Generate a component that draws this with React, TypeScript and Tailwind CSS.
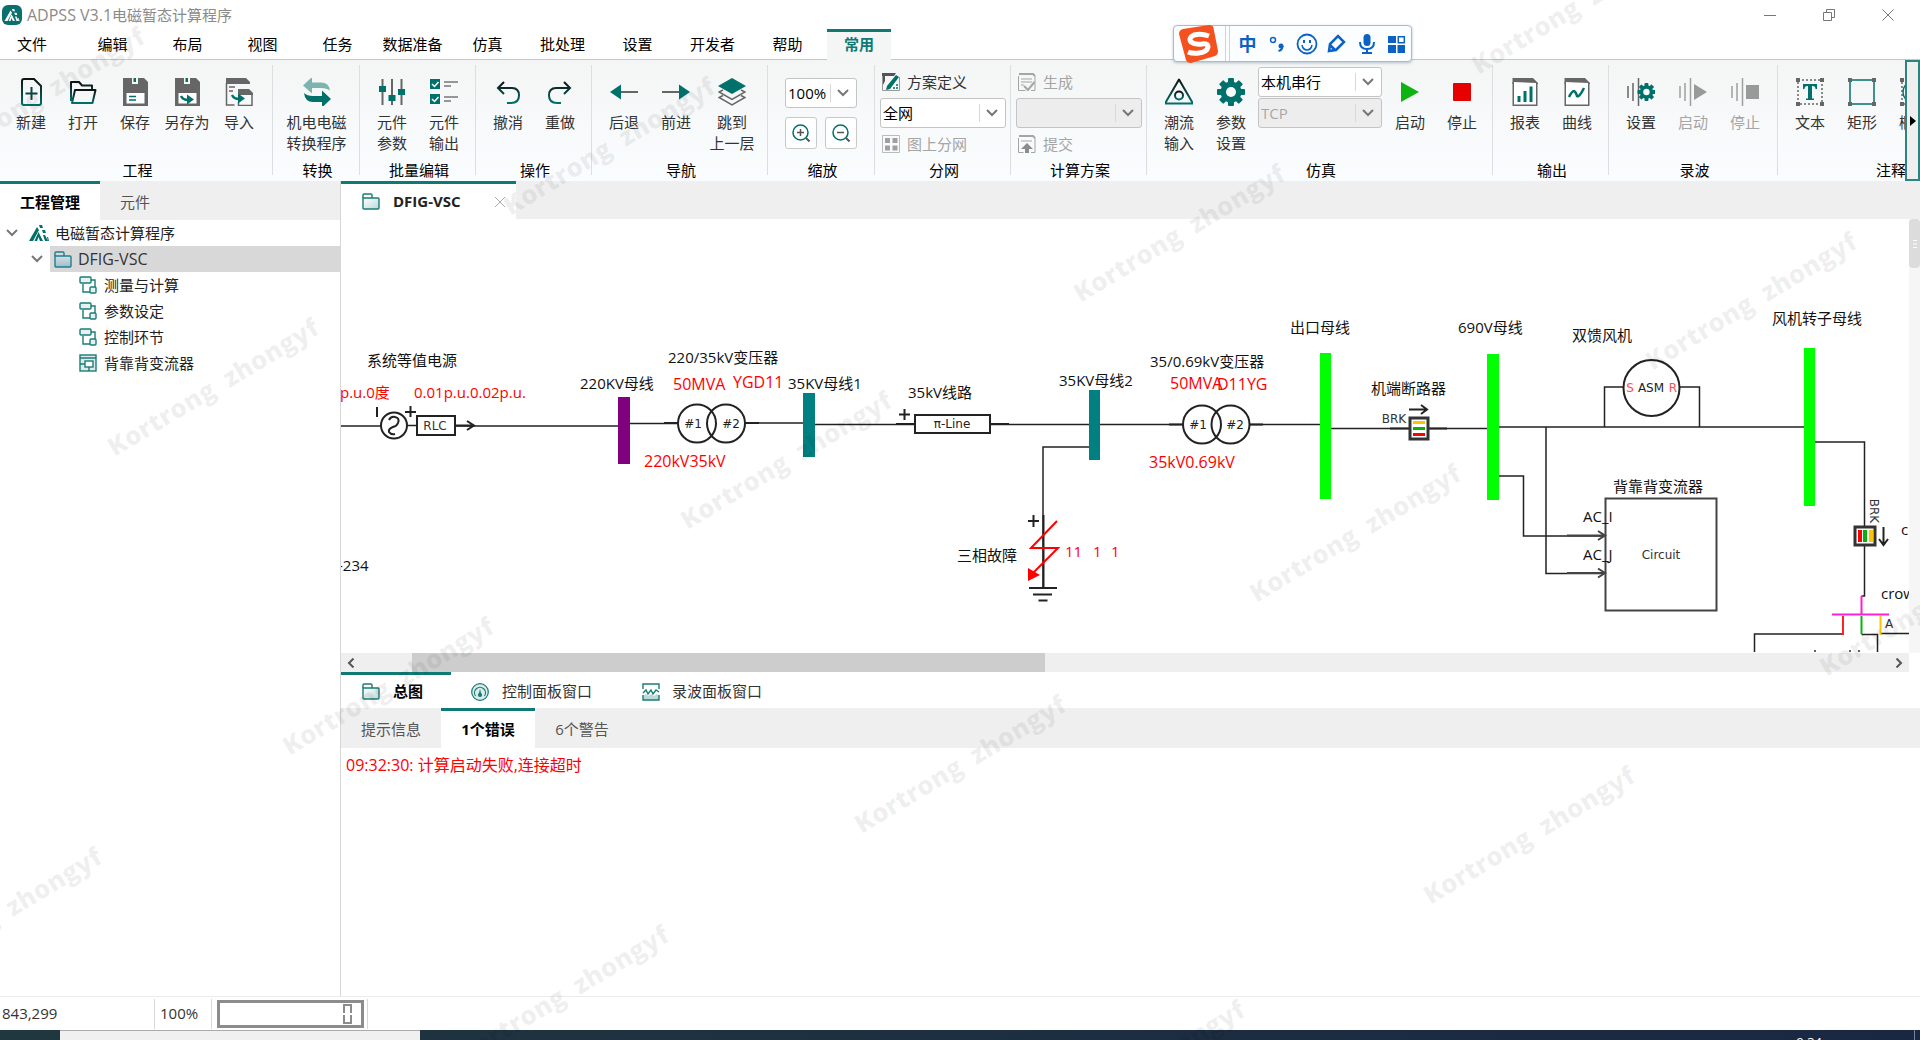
import React, { useState } from "react";

const TEAL = "#00706b";
const GRAY = "#666666";

type IconProps = { className?: string };

const box = "h-7 w-7 shrink-0";

const NewIcon = () => (
  <svg viewBox="0 0 28 28" className={box} fill="none">
    <defs>
      <linearGradient id="darkTeal" x1="0" y1="0" x2="0" y2="1">
        <stop offset="0" stopColor="#111" />
        <stop offset="1" stopColor={TEAL} />
      </linearGradient>
    </defs>
    <path d="M7 1h10l7 7v17q0 2-2 2H7q-2 0-2-2V3q0-2 2-2Z" stroke="url(#darkTeal)" strokeWidth="2" />
    <path d="M14.500 9v13M8.500 15.500h12" stroke="#0a4542" strokeWidth="2" />
  </svg>
);
const OpenIcon = () => (
  <svg viewBox="0 0 28 28" className={box} fill="none" stroke="url(#darkTeal)" strokeWidth="2" strokeLinejoin="round">
    <path d="M2 23V4h8l3 3.500h10V12" />
    <path d="M6 12h20.500l-3 13H3Z" />
  </svg>
);
const Floppy = () => (
  <>
    <path d="M2 0h9v6h6V0h6l4 4v24H2Z" fill={GRAY} />
    <path d="M5.500 15h18v10.500h-18Z" fill="#fff" />
    <path d="M12.500 0h2.500v4h-2.500Z" fill={TEAL} />
  </>
);
const SaveIcon = () => (
  <svg viewBox="0 0 28 28" className={box}>
    <Floppy />
    <path d="M8 18.500h7M8 22h7" stroke={TEAL} strokeWidth="1.500" />
  </svg>
);
const ArrowIn = () => (
  <>
    <path d="M0 0q2 4 7 4" fill="none" stroke={TEAL} strokeWidth="2.500" />
    <path d="M6 -1.500l7 5-7 5Z" fill={TEAL} />
  </>
);
const SaveAsIcon = () => (
  <svg viewBox="0 0 28 28" className={box}>
    <Floppy />
    <g transform="translate(8 18)"><ArrowIn /></g>
  </svg>
);
const ImportIcon = () => (
  <svg viewBox="0 0 28 28" className={box}>
    <path d="M1 0h20l4 4v2H1Z" fill={GRAY} />
    <path d="M1.500 5v22h8M4 9h6M4 13h4" fill="none" stroke={GRAY} strokeWidth="1.500" />
    <path d="M13 11h11l4 4v2H13Z" fill={GRAY} />
    <path d="M13.500 24v3.500h13.500V16" fill="none" stroke={GRAY} strokeWidth="1.500" />
    <g transform="translate(7 17)"><ArrowIn /></g>
  </svg>
);
const SwapIcon = () => (
  <svg viewBox="0 0 28 28" className={box}>
    <path d="M0 7.500 9-1v5.500h9q8 0 9 8-3-2.500-9-2.500H9v5.500Z" fill="#7db4b0" />
    <path d="M28 21 19 29.500V24h-9q-8 0-9-9 3 3 9 3h9v-5.500Z" fill={TEAL} />
  </svg>
);
const SlidersIcon = () => (
  <svg viewBox="0 0 28 28" className={box}>
    <path d="M4.500 1v26M14 1v26M23.500 1v26" stroke={GRAY} strokeWidth="2" />
    <path d="M1 8h7v6H1ZM10.500 17h7v6h-7ZM20 11h7v6h-7Z" fill={TEAL} />
  </svg>
);
const ChecksIcon = () => (
  <svg viewBox="0 0 28 28" className={box} fill="none">
    <path d="M0 1h10v10H0ZM0 16h10v10H0Z" fill={TEAL} />
    <path d="m2 6 2.500 2.500L8.500 4M2 21l2.500 2.500L8.500 19" stroke="#fff" strokeWidth="1.500" />
    <path d="M14 4h14M14 8h7M14 19h14M14 23h7" stroke="#777" strokeWidth="1.500" />
  </svg>
);
const UndoIcon = () => (
  <svg viewBox="0 0 28 28" className={box} fill="none" stroke="url(#darkTeal)" strokeWidth="2">
    <path d="M10 4 4 10l6 6M4 10h14q7 0 7 7.500T17 25h-4" />
  </svg>
);
const RedoIcon = () => (
  <svg viewBox="0 0 28 28" className={box} fill="none" stroke="url(#darkTeal)" strokeWidth="2">
    <path d="m18 4 6 6-6 6M24 10H10q-7 0-7 7.500T11 25h4" />
  </svg>
);
const BackIcon = () => (
  <svg viewBox="0 0 28 28" className={box}>
    <path d="M10 14h18" stroke={GRAY} strokeWidth="2" />
    <path d="M0 14 11 6.500v15Z" fill={TEAL} />
  </svg>
);
const ForwardIcon = () => (
  <svg viewBox="0 0 28 28" className={box}>
    <path d="M0 14h18" stroke={GRAY} strokeWidth="2" />
    <path d="M28 14 17 6.500v15Z" fill={TEAL} />
  </svg>
);
const LayersIcon = () => (
  <svg viewBox="0 0 28 28" className={box} fill="none">
    <path d="M14 0 28 8 14 16 0 8Z" fill={TEAL} />
    <path d="m5 12-4 2 13 7.500L27 14l-4-2M5 17.500l-4 2L14 27l13-7.500-4-2" stroke={GRAY} strokeWidth="1.500" />
  </svg>
);
const FlowIcon = () => (
  <svg viewBox="0 0 28 28" className={box} fill="none" stroke="url(#darkTeal)" strokeWidth="2">
    <path d="M14 1.500 28 25.500H0Z" strokeLinejoin="round" />
    <circle cx="14" cy="17.500" r="4" />
  </svg>
);
const Gear = ({ fill = TEAL }: { fill?: string }) => (
  <g fill={fill}>
    {[0, 45, 90, 135].map((a) => (
      <rect key={a} x="11" y="0" width="6" height="28" rx="1" transform={`rotate(${a} 14 14)`} />
    ))}
    <circle cx="14" cy="14" r="10.500" />
    <circle cx="14" cy="14" r="5" fill="#f7f9fb" />
  </g>
);
const GearIcon = () => (
  <svg viewBox="0 0 28 28" className={box}><Gear /></svg>
);
const PlayIcon = () => (
  <svg viewBox="0 0 28 28" className={box}><path d="M5 4l18 10L5 24Z" fill="#10b410" /></svg>
);
const StopIcon = () => (
  <svg viewBox="0 0 28 28" className={box}><rect x="5" y="5" width="18" height="18" rx="1" fill="#e60000" /></svg>
);
const Sheet = () => (
  <>
    <path d="M1.500 0H22l5 5v1H1.500Z" fill={GRAY} />
    <path d="M2.250 4v23.250h23.500V5" fill="#fff" stroke={GRAY} strokeWidth="1.500" />
  </>
);
const ReportIcon = () => (
  <svg viewBox="0 0 28 28" className={box}>
    <Sheet />
    <path d="M8 24v-6M14 24V13M20 24V8.500" stroke={TEAL} strokeWidth="3" />
  </svg>
);
const CurveIcon = () => (
  <svg viewBox="0 0 28 28" className={box} fill="none">
    <Sheet />
    <path d="M6 19q3-6 5-6 2 1 3 5 2 2 7-8" stroke={TEAL} strokeWidth="2.500" />
  </svg>
);
const Bars = ({ c }: { c: string }) => (
  <path d="M1 8v12M6 5v18M11.500 0v28" stroke={c} strokeWidth="1.500" />
);
const RecSetIcon = () => (
  <svg viewBox="0 0 28 28" className={box}>
    <Bars c={GRAY} />
    <g transform="translate(10.500 5) scale(.64)"><Gear /></g>
  </svg>
);
const RecPlayIcon = () => (
  <svg viewBox="0 0 28 28" className={box}><Bars c="#a0a0a0" /><path d="M15 6l13 8-13 8Z" fill="#999" /></svg>
);
const RecStopIcon = () => (
  <svg viewBox="0 0 28 28" className={box}><Bars c="#a0a0a0" /><path d="M15 7h13v14H15Z" fill="#999" /></svg>
);
const Corners = () => <path d="M0 0h4v4H0ZM24 0h4v4h-4ZM0 24h4v4H0ZM24 24h4v4h-4Z" fill={GRAY} />;
const TextIcon = () => (
  <svg viewBox="0 0 28 28" className={box} fill="none">
    <Corners />
    <path d="M2 2h24v24H2Z" stroke={GRAY} strokeWidth="1.500" strokeDasharray="2 2" />
    <path d="M7 6h14v5h-1.500q0-3-3-3H16v12.500h2V22h-8v-1.500h2V8h-.500q-3 0-3 3H7Z" fill={TEAL} />
  </svg>
);
const RectIcon = () => (
  <svg viewBox="0 0 28 28" className={box} fill="none">
    <path d="M2 2h24v24H2Z" stroke={TEAL} strokeWidth="1.500" />
    <Corners />
  </svg>
);
const EllipseIcon = () => (
  <svg viewBox="0 0 28 28" className={box} fill="none">
    <Corners />
    <path d="M2 2h24v24H2Z" stroke={GRAY} strokeWidth="1.500" strokeDasharray="2 2" />
    <ellipse cx="14" cy="14" rx="11" ry="11" stroke={TEAL} strokeWidth="1.500" />
  </svg>
);

const small = "h-[18px] w-[18px] shrink-0";
const PlanIcon = () => (
  <svg viewBox="0 0 18 18" className={small}>
    <path d="M0 0h14l-2 3H3v5L0 14Z" fill="#555" />
    <path d="M.500 3v14.500h17V4" fill="none" stroke="#999" />
    <path d="M14 2l3 2-9 12-4 1 1-4Z" fill={TEAL} />
    <path d="M11 15h2M14 15h2M14 12h2" stroke={TEAL} strokeWidth="1.500" />
  </svg>
);
const GridIcon = () => (
  <svg viewBox="0 0 18 18" className={small}>
    <path d="M.500.500h17v17H.500Z" fill="none" stroke="#bbb" />
    <path d="M3 3h5v5H3ZM10.500 3h5v5h-5ZM3 10.500h5v5H3ZM10.500 10.500h5v5h-5Z" fill="#a0a0a0" />
  </svg>
);
const GenIcon = () => (
  <svg viewBox="0 0 18 18" className={small} fill="none" stroke="#a5a5a5">
    <path d="M1 1h14l2 2" strokeWidth="2" />
    <path d="M.500 3v14.500h7M17 3v14.500h-4M3 6h11M3 9h11M3 12h3" />
    <path d="m6 13 4 4 6.500-8" strokeWidth="2" />
  </svg>
);
const SubmitIcon = () => (
  <svg viewBox="0 0 18 18" className={small} fill="none" stroke="#a5a5a5">
    <path d="M1 1h14l2 2" strokeWidth="2" />
    <path d="M.500 3v14.500h5M17 3v14.500h-4M3 6h11" />
    <path d="M9 8l6 6h-4v4H7v-4H3Z" fill="#8c8c8c" stroke="none" />
  </svg>
);

const Chevron = ({ className = "" }: IconProps) => (
  <svg viewBox="0 0 12 8" className={`h-2 w-3 ${className}`} fill="none" stroke="#777" strokeWidth="2">
    <path d="m1 1 5 5 5-5" />
  </svg>
);

function Combo({ label, value, disabled, className }: { label: string; value: string; disabled?: boolean; className: string }) {
  return (
    <div className={`relative h-[30px] ${className}`}>
      <select
        aria-label={label}
        disabled={disabled}
        className="h-full w-full appearance-none rounded-[3px] border border-[#c4c4c4] bg-white pr-6 pl-[2px] text-[15px] text-black opacity-100 disabled:bg-[#ededed] disabled:text-[#a8a8a8]"
      >
        <option>{value}</option>
      </select>
      <span className="pointer-events-none absolute inset-y-[6px] right-0 flex w-[27px] items-center border-l border-[#d8d8d8] pl-[6px]">
        <Chevron />
      </span>
    </div>
  );
}

function Tool({ icon, label, disabled, width = "w-[52px]" }: { icon: React.ReactNode; label: string; disabled?: boolean; width?: string }) {
  return (
    <button
      disabled={disabled}
      className={`flex shrink-0 flex-col items-center gap-[6px] whitespace-pre text-center text-[15px] leading-[21px] text-[#333] disabled:text-[#a5a5a5] ${width}`}
    >
      {icon}
      <span>{label}</span>
    </button>
  );
}

function Group({ title, width, children }: { title: string; width: string; children: React.ReactNode }) {
  return (
    <section aria-label={title} className={`relative flex h-full shrink-0 flex-col ${width}`}>
      <div className="flex flex-1 pt-[18px]">{children}</div>
      <div className="pb-px pl-[2px] text-center text-[15px] leading-5 text-black">{title}</div>
      <span className="absolute top-[5px] right-0 h-[110px] w-px bg-[#dcdfe0]" />
    </section>
  );
}

function MiniTool({ icon, label, disabled }: { icon: React.ReactNode; label: string; disabled?: boolean }) {
  return (
    <button disabled={disabled} className="flex h-[30px] items-center gap-[7px] px-[2px] text-[15px] text-[#333] disabled:text-[#a5a5a5]">
      {icon}
      {label}
    </button>
  );
}

function Ribbon() {
  return (
    <div className="flex h-[121px] shrink-0 bg-gradient-to-b from-[#f4f5f5] to-[#fafdff]">
      <div className="flex min-w-0 flex-1 overflow-hidden">
        <Group title="工程" width="w-[273px]">
          <div className="flex pl-[5px]">
            <Tool icon={<NewIcon />} label="新建" />
            <Tool icon={<OpenIcon />} label="打开" />
            <Tool icon={<SaveIcon />} label="保存" />
            <Tool icon={<SaveAsIcon />} label="另存为" />
            <Tool icon={<ImportIcon />} label="导入" />
          </div>
        </Group>
        <Group title="转换" width="w-[87px]">
          <Tool width="w-full" icon={<SwapIcon />} label={"机电电磁\n转换程序"} />
        </Group>
        <Group title="批量编辑" width="w-[116px]">
          <div className="flex pl-[6px]">
            <Tool icon={<SlidersIcon />} label={"元件\n参数"} />
            <Tool icon={<ChecksIcon />} label={"元件\n输出"} />
          </div>
        </Group>
        <Group title="操作" width="w-[116px]">
          <div className="flex pl-[6px]">
            <Tool icon={<UndoIcon />} label="撤消" />
            <Tool icon={<RedoIcon />} label="重做" />
          </div>
        </Group>
        <Group title="导航" width="w-[176px]">
          <div className="flex pl-[6px]">
            <Tool icon={<BackIcon />} label="后退" />
            <Tool icon={<ForwardIcon />} label="前进" />
            <Tool width="w-[60px]" icon={<LayersIcon />} label={"跳到\n上一层"} />
          </div>
        </Group>
        <Group title="缩放" width="w-[107px]">
          <div className="flex flex-col gap-[9px] pl-[17px]">
            <Combo label="缩放比例" value="100%" className="w-[72px]" />
            <div className="flex gap-2">
              {["放大", "缩小"].map((name, i) => (
                <button key={name} aria-label={name} className="flex h-8 w-8 items-center justify-center rounded-[3px] border border-[#c9c9c9] bg-white">
                  <svg viewBox="0 0 18 18" className="h-[18px] w-[18px]" fill="none" strokeWidth="1.500">
                    <circle cx="8.500" cy="8.500" r="7.500" stroke={TEAL} />
                    <path d={i ? "M5 8.500h7" : "M5 8.500h7M8.500 5v7"} stroke="#555" />
                    <path d="m14 14 3.500 3.500" stroke="#555" strokeWidth="2" />
                  </svg>
                </button>
              ))}
            </div>
          </div>
        </Group>
        <Group title="分网" width="w-[136px]">
          <div className="-mt-[11px] flex w-full flex-col gap-px px-[5px]">
            <MiniTool icon={<PlanIcon />} label="方案定义" />
            <Combo label="分网" value="全网" className="w-full" />
            <MiniTool icon={<GridIcon />} label="图上分网" disabled />
          </div>
        </Group>
        <Group title="计算方案" width="w-[136px]">
          <div className="-mt-[11px] flex w-full flex-col gap-px px-[5px]">
            <MiniTool icon={<GenIcon />} label="生成" disabled />
            <Combo label="计算方案" value="" disabled className="w-full" />
            <MiniTool icon={<SubmitIcon />} label="提交" disabled />
          </div>
        </Group>
        <Group title="仿真" width="w-[346px]">
          <div className="flex pl-[6px]">
            <Tool icon={<FlowIcon />} label={"潮流\n输入"} />
            <Tool icon={<GearIcon />} label={"参数\n设置"} />
            <div className="-mt-[11px] mr-[2px] flex w-[125px] flex-col gap-px pl-px">
              <Combo label="运行方式" value="本机串行" className="w-full" />
              <Combo label="通信协议" value="TCP" disabled className="w-full" />
            </div>
            <Tool icon={<PlayIcon />} label="启动" />
            <Tool icon={<StopIcon />} label="停止" />
          </div>
        </Group>
        <Group title="输出" width="w-[116px]">
          <div className="flex pl-[6px]">
            <Tool icon={<ReportIcon />} label="报表" />
            <Tool icon={<CurveIcon />} label="曲线" />
          </div>
        </Group>
        <Group title="录波" width="w-[169px]">
          <div className="flex pl-[6px]">
            <Tool icon={<RecSetIcon />} label="设置" />
            <Tool icon={<RecPlayIcon />} label="启动" disabled />
            <Tool icon={<RecStopIcon />} label="停止" disabled />
          </div>
        </Group>
        <Group title="注释" width="w-[224px]">
          <div className="flex pl-[6px]">
            <Tool icon={<TextIcon />} label="文本" />
            <Tool icon={<RectIcon />} label="矩形" />
            <Tool icon={<EllipseIcon />} label="椭圆" />
          </div>
        </Group>
      </div>
      <button aria-label="更多" className="flex w-[15px] shrink-0 items-center justify-center border-2 border-[#2b8480] bg-[#efefef]">
        <svg viewBox="0 0 6 10" className="h-[10px] w-[6px]"><path d="M0 0l6 5-6 5Z" fill="#000" /></svg>
      </button>
    </div>
  );
}

const menus = ["编辑", "布局", "视图", "任务", "数据准备", "仿真", "批处理", "设置", "开发者", "帮助"];

function SogouBar() {
  return (
    <div className="absolute top-[25px] left-[1173px] flex h-[37px] w-[239px] items-center rounded-[4px] border border-[#a9bccd] bg-[#fcfdfe] pl-[5px] shadow-[0_1px_3px_rgba(80,110,140,0.4)]">
      <svg viewBox="0 0 40 38" className="h-[38px] w-10 shrink-0">
        <path d="M4 4 30 0q4 0 4.500 3L39 26q0 4-3 5L12 38q-4 0-5-3L0 9q0-4 4-5Z" fill="#f4511e" />
        <path d="M30 11q-8-3-15-1-6 3-3 7 4 3 11 2 6-1 6 3-1 5-9 6-6 1-11-1" fill="none" stroke="#fff" strokeWidth="5" />
      </svg>
      <span className="mr-2 ml-[6px] h-full w-[5px] border-x border-[#f7c9b4]" />
      <span className="w-5 text-center text-[18px] leading-none font-bold text-[#0a63c4]">中</span>
      <svg viewBox="0 0 142 24" className="ml-3 h-6 w-[142px] shrink-0" fill="none" stroke="#0a63c4" strokeWidth="1.500">
        <circle cx="4" cy="8" r="2.500" />
        <circle cx="12" cy="14" r="2.500" fill="#0a63c4" stroke="none" />
        <path d="M13.500 14q0 4-4 5" strokeWidth="2" />
        <circle cx="38" cy="12" r="9.500" strokeWidth="1.800" />
        <path d="M33 13q1 5 5 5t5-5" />
        <path d="M35 8v3M41 8v3" strokeWidth="2" />
        <path d="m60 19 1-7 8-8 6 6-8 8-7 1Zm1-6 5 5" strokeWidth="2.500" />
        <rect x="94.500" y="2" width="7" height="12" rx="3.500" fill="#0a63c4" stroke="none" />
        <path d="M91 10q0 7 7 7t7-7M98 17v4M93 21h10" strokeWidth="2" />
        <path d="M119 4h8v7h-8ZM119 13h8v8h-8ZM128.500 13h7.500v8h-7.500Z" fill="#0a63c4" stroke="none" />
        <path d="M129.300 4.700h6v6h-6Z" />
      </svg>
    </div>
  );
}

const AdpssMark = ({ className = "", color = TEAL }: { className?: string; color?: string }) => (
  <svg viewBox="0 0 20 16" className={className} fill={color}>
    <path d="M0 16 8 2l2 3-6 11ZM5.500 16 9.500 7l4.500 9h-3l-1.500-4-1.500 4Z" />
    <path d="M10 0h3l1 3h-3ZM13 5h3l1 3h-3ZM14 10h2l3 6h-3ZM18 12h1l1 4h-1Z" />
  </svg>
);

const Folder = ({ dark }: { dark?: boolean }) => (
  <svg viewBox="0 0 18 17" className="h-[17px] w-[18px] shrink-0" stroke={dark ? "#1f7e93" : "#1b7c76"} strokeWidth="1.400">
    <defs>
      <linearGradient id="fold" x1="0" y1="0" x2="1" y2="1"><stop offset="0" stopColor="#fff" /><stop offset="1" stopColor="#bcd9d7" /></linearGradient>
      <linearGradient id="foldDark" x1="0" y1="0" x2="0" y2="1"><stop offset="0" stopColor="#d5e0e4" /><stop offset="1" stopColor="#9dbdc9" /></linearGradient>
    </defs>
    <path d="M1 5V2q0-1 1-1h7q1 0 1 1v3" fill="none" />
    <path d="M1 5h15q1 0 1 1v9q0 1-1 1H2q-1 0-1-1Z" fill={dark ? "url(#foldDark)" : "url(#fold)"} />
  </svg>
);
const LinkIcon = () => (
  <svg viewBox="0 0 18 18" className="h-[18px] w-[18px] shrink-0" fill="#e6f1f0" stroke="#1b7c76" strokeWidth="1.400">
    <path d="M12 4h4v7M4 8v8h7" fill="none" />
    <rect x="1" y="1" width="11" height="6" rx="1" />
    <rect x="11" y="11" width="6" height="6" rx="1" />
  </svg>
);
const ModuleIcon = () => (
  <svg viewBox="0 0 18 18" className="h-[18px] w-[18px] shrink-0" fill="none" stroke="#1b7c76" strokeWidth="1.400">
    <rect x="1" y="1" width="16" height="16" fill="#dcebea" />
    <path d="M1 4h16M1 10h5M10 13v4" />
    <rect x="6" y="7" width="8" height="6" fill="#fff" />
  </svg>
);
const GaugeIcon = () => (
  <svg viewBox="0 0 18 18" className="h-[18px] w-[18px] shrink-0" fill="none" stroke="#1b7c76" strokeWidth="1.200">
    <circle cx="9" cy="9" r="8.300" fill="#d9ebea" />
    <path d="M4.500 13a5.500 5.500 0 1 1 9 0" />
    <path d="M9 6l1.500 6h-3Z" fill="#1b7c76" stroke="none" />
    <circle cx="9" cy="12" r="1.500" fill="#1b7c76" />
  </svg>
);
const WaveIcon = () => (
  <svg viewBox="0 0 18 18" className="h-[18px] w-[18px] shrink-0" fill="none" stroke="#1b7c76" strokeWidth="1.400">
    <path d="M1 6V1h16v5" />
    <path d="M1 17v-4l3-2 2 2 3-2 3 2 3-2 2 2v4Z" fill="#bcd9d7" stroke="none" />
    <path d="M1 12v5h16v-5" />
    <path d="m1 10 3-3 2 4 3-4 2 4 3-4 3 2" />
  </svg>
);

function Sidebar() {
  const row = "flex h-[26px] w-full items-center text-left text-[15px] text-[#222]";
  return (
    <aside className="flex w-[341px] shrink-0 flex-col border-r border-[#d6d6d6] bg-white">
      <div role="tablist" className="flex h-[39px] shrink-0 bg-[#efefef] text-[15px]">
        <button role="tab" aria-selected="true" className="w-[100px] border-t-[3px] border-[#0f7a74] bg-white font-bold text-black">工程管理</button>
        <button role="tab" aria-selected="false" className="w-[70px] pt-[3px] text-[#555]">元件</button>
      </div>
      <nav aria-label="工程树">
        <button className={`${row} pl-[6px]`}>
          <Chevron />
          <AdpssMark className="mr-[6px] ml-[11px] h-4 w-5" />
          电磁暂态计算程序
        </button>
        <div className="flex h-[26px] items-center pl-[31px]">
          <Chevron />
          <button className="ml-[7px] flex h-full flex-1 items-center gap-[6px] bg-[#d8d8d8] pl-1 text-[16px] text-[#333]">
            <Folder dark />
            DFIG-VSC
          </button>
        </div>
        {["测量与计算", "参数设定", "控制环节", "背靠背变流器"].map((t, i) => (
          <button key={t} className={`${row} gap-[7px] pl-[79px]`}>
            {i < 3 ? <LinkIcon /> : <ModuleIcon />}
            {t}
          </button>
        ))}
      </nav>
    </aside>
  );
}

type Label = [number, number, string, string?, number?];

const labels: Label[] = [
  [367, 360, "系统等值电源"],
  [340, 392, "p.u.0度", "red"],
  [414, 392, "0.01p.u.0.02p.u.", "red"],
  [580, 383, "220KV母线"],
  [668, 357, "220/35kV变压器"],
  [673, 384, "50MVA", "red", 16],
  [733, 382, "YGD11", "red", 16],
  [788, 383, "35KV母线1"],
  [908, 392, "35kV线路"],
  [644, 461, "220kV35kV", "red", 16],
  [1059, 380, "35KV母线2"],
  [957, 555, "三相故障"],
  [1065, 551, "11", "red"],
  [1093, 551, "1", "red"],
  [1111, 551, "1", "red"],
  [1150, 361, "35/0.69kV变压器"],
  [1170, 383, "50MVA", "red", 16],
  [1217, 384, "D11YG", "red", 16],
  [1149, 462, "35kV0.69kV", "red", 16],
  [1290, 327, "出口母线"],
  [1458, 327, "690V母线"],
  [1371, 388, "机端断路器"],
  [1572, 335, "双馈风机"],
  [1772, 318, "风机转子母线"],
  [1613, 486, "背靠背变流器"],
  [1583, 516, "AC_I"],
  [1583, 554, "AC_J"],
  [338, 565, "-234"],
  [1901, 529, "crowbar"],
  [1881, 593, "crowbar"],
];

const symbolText: Label[] = [
  [435, 426, "RLC", "#333"],
  [693, 424, "#1", "#222"],
  [731, 424, "#2", "#222"],
  [952, 424, "π-Line", "#222"],
  [1198, 425, "#1", "#222"],
  [1235, 425, "#2", "#222"],
  [1394, 419, "BRK", "#333"],
  [1630, 388, "S", "#ff5050"],
  [1651, 388, "ASM", "#222"],
  [1673, 388, "R", "#ff5050"],
  [1661, 555, "Circuit", "#333"],
  [1889, 624, "A", "#333"],
];

function Schematic() {
  return (
    <svg viewBox="341 219 1568 434" className="h-[434px] w-[1568px] shrink-0" fill="none" stroke="#222" strokeWidth="1.500">
      <path d="M341 426h40M407 425.500h10M455 426h163M630 423.500h48M745 423h59M815 424.500h99M990 424.500h99M1100 424.500h83M1249 424.500h71M1331 428.500h156M1499 427h305" />
      <path d="M1089 447h-46v141M1499 476h24.500v60H1604M1546 427v146.500h58M1604.500 427v-40h19M1680 387h19.500v40M1815 442h49.500v154h-3" />
      <path d="M1754.500 652v-18H1843M1861.500 634.500h16V652M1881 633.500h28" />
      <g strokeWidth="2">
        <circle cx="394" cy="425.500" r="13" />
        <path d="M389 420q2-4 6-3 5 1 3 6-1 3-5 4-5 2-4 5 2 3 6 2M377 407v10M405 412h11M410.500 406v11" />
        <rect x="417" y="416" width="38" height="19" />
        <path d="M455 425.500h18M467 421l7 4.500-7 4.500" />
        <circle cx="697" cy="423.500" r="19" />
        <circle cx="726" cy="423.500" r="19" />
        <rect x="915" y="415" width="75" height="18" />
        <path d="M664 423h14M745 423h14M896 424h19M990 424h19M1169 424.500h14M1249 424.500h14" />
        <path d="M899 414.500h11M904.500 409v11M1028 521h11M1033.500 515v12" />
        <circle cx="1202" cy="424.500" r="19" />
        <circle cx="1230.500" cy="424.500" r="19" />
        <path d="M1390 428.500h19M1428 428.500h19M1409 409.500h18M1421 405l6 4.500-6 4.500" />
        <rect x="1410" y="418" width="18" height="21" strokeWidth="3" stroke="#333" fill="#fff" />
        <circle cx="1651.500" cy="388" r="28" />
        <rect x="1605.500" y="498.500" width="111" height="112" stroke="#444" />
        <path d="M1567 535.500h37M1598 531l7 4.500-7 4.500M1567 573h37M1598 568.500l7 4.500-7 4.500" stroke="#444" />
        <rect x="1855" y="527" width="20" height="18" strokeWidth="3" stroke="#333" fill="#fff" />
        <path d="M1883.500 527v18M1879 539l4.500 6 4.500-6" />
        <path d="M1043.500 515v73M1029 588h28M1033 594.500h19M1038.500 600.500h9" />
      </g>
      <g stroke="none">
        <rect x="618" y="397" width="12" height="67" fill="#800080" />
        <rect x="803" y="393" width="12" height="64" fill="#008080" />
        <rect x="1089" y="390" width="11" height="70" fill="#008080" />
        <rect x="1320" y="353" width="11" height="146" fill="#0f0" />
        <rect x="1487" y="354" width="12" height="146" fill="#0f0" />
        <rect x="1804" y="348" width="11" height="158" fill="#0f0" />
        <path d="M1028 568l12 7-12 6Z" fill="red" />
        <path d="M1413 421h12v3h-12Z" fill="#ffc400" />
        <path d="M1413 427h12v3h-12Z" fill="#0bb00b" />
        <path d="M1413 433h12v3h-12Z" fill="#f00" />
        <path d="M1858 530h4v12h-4Z" fill="#f00" />
        <path d="M1863 530h4v12h-4Z" fill="#0bb00b" />
        <path d="M1869 530h4v12h-4Z" fill="#ffc400" />
      </g>
      <path d="M1057 521l-26 27h27l-28 28" stroke="red" strokeWidth="2" />
      <path d="M1832 614.500h57M1861.500 596v19" stroke="#ff1fd2" strokeWidth="2" />
      <path d="M1843 616v19" stroke="#f22" strokeWidth="2" />
      <path d="M1861.500 616v18" stroke="#0bb00b" strokeWidth="2" />
      <path d="M1880.500 616v19" stroke="#ffc400" strokeWidth="2" />
      <path d="M1814 651h2M1849 651h2M1858 651h2" stroke="#333" />
      <g stroke="none" dominantBaseline="central">
        {labels.map(([x, y, text, fill = "#111", size = 15]) => (
          <text key={`${x}-${y}`} x={x} y={y} fill={fill} fontSize={size}>
            {text}
          </text>
        ))}
        <g className="font-['DejaVu_Sans',sans-serif]" fontSize="12" textAnchor="middle">
          {symbolText.map(([x, y, text, fill]) => (
            <text key={`${x}-${y}`} x={x} y={y} fill={fill}>
              {text}
            </text>
          ))}
          <text transform="translate(1874 511) rotate(90)" fill="#333">BRK</text>
        </g>
      </g>
    </svg>
  );
}

const marks = [
  "left-[39px] top-[96px]",
  "left-[-4px] top-[916px]",
  "left-[213px] top-[387px]",
  "left-[388px] top-[686px]",
  "left-[609px] top-[146px]",
  "left-[563px] top-[994px]",
  "left-[786px] top-[460px]",
  "left-[960px] top-[764px]",
  "left-[1179px] top-[233px]",
  "left-[1139px] top-[1069px]",
  "left-[1355px] top-[533px]",
  "left-[1577px] top-[5px]",
  "left-[1529px] top-[835px]",
  "left-[1751px] top-[301px]",
  "left-[1925px] top-[607px]",
];

export default function App() {
  const [pane, setPane] = useState(1);
  const tab = "border-t-[3px]";
  return (
    <div className='relative flex h-screen flex-col overflow-hidden bg-white font-["Open_Sans","Noto_Sans_CJK_SC",sans-serif] text-[15px] text-black'>
      <header className="flex h-[29px] shrink-0 items-center pl-[2px]">
        <span className="flex h-5 w-5 items-center justify-center rounded-[6px] bg-[#0b706b]">
          <AdpssMark className="h-3 w-4" color="#fff" />
        </span>
        <h1 className="ml-[5px] text-[15px] text-[#8a8a8a]">
          <span className="text-[16px]">ADPSS V3.1</span>电磁暂态计算程序
        </h1>
        <div className="mr-[3px] ml-auto flex">
          {["M1 7.500h12", "M1.500 4.500h8v8h-8ZM4.500 4V1.500h8v8H10", "M1.500 1.500l11 11M12.500 1.500l-11 11"].map((d, i) => (
            <button key={d} aria-label={["最小化", "还原", "关闭"][i]} className="flex h-7 w-[59px] items-center justify-center">
              <svg viewBox="0 0 14 14" className="h-[14px] w-[14px]" fill="none" stroke="#777"><path d={d} /></svg>
            </button>
          ))}
        </div>
      </header>
      <nav className="flex h-[31px] shrink-0 border-b border-[#b9cbd9] text-[15px]">
        <button className="mr-[11px] w-16">文件</button>
        {menus.map((m) => (
          <button key={m} className="w-[75px]">{m}</button>
        ))}
        <button className="-mb-px ml-[2px] w-16 border-t-[3px] border-[#0f7a74] bg-[#f4f5f5] pb-[3px] font-bold text-[#0f7a74]">常用</button>
      </nav>
      <Ribbon />
      <main className="flex min-h-0 flex-1">
        <Sidebar />
        <div className="flex min-w-0 flex-1 flex-col">
          <div className="flex h-[38px] shrink-0 bg-[#efefef]">
            <div className="flex w-[175px] items-center border-t-[3px] border-[#0f7a74] bg-white pl-[21px]">
              <Folder />
              <span className="ml-[13px] text-[15px] font-bold text-[#222]">DFIG-VSC</span>
              <button aria-label="关闭 DFIG-VSC" className="mr-[10px] ml-auto">
                <svg viewBox="0 0 12 12" className="h-3 w-3" stroke="#aaa"><path d="M1 1l10 10M11 1 1 11" /></svg>
              </button>
            </div>
          </div>
          <div className="flex h-[434px] shrink-0">
            <div className="flex min-w-0 flex-1 overflow-hidden"><Schematic /></div>
            <div className="w-[11px] bg-[#f6f6f6]">
              <div className="flex h-[49px] items-center justify-center rounded-[4px] bg-[#dcdcdc] text-white">
                <svg viewBox="0 0 4 8" className="h-2 w-1" stroke="#fff"><path d="M0 .500h4M0 4h4M0 7.500h4" /></svg>
              </div>
            </div>
          </div>
          <div className="mr-[11px] flex h-[19px] shrink-0 items-center bg-[#efefef]">
            <svg viewBox="0 0 8 10" className="ml-[6px] h-[10px] w-2" fill="none" stroke="#555" strokeWidth="2"><path d="M6.500.500 2 5l4.500 4.500" /></svg>
            <div className="ml-[57px] h-full w-[633px] bg-[#cdcdcd]" />
            <svg viewBox="0 0 8 10" className="mr-[6px] ml-auto h-[10px] w-2" fill="none" stroke="#555" strokeWidth="2"><path d="M1.500.500 6 5 1.500 9.500" /></svg>
          </div>
          <div role="tablist" className="flex h-[36px] shrink-0 text-[#333]">
            <button role="tab" aria-selected="true" className={`${tab} flex w-[110px] items-center gap-[13px] border-[#0f7a74] pl-[21px] font-bold text-black`}>
              <Folder />总图
            </button>
            <button role="tab" aria-selected="false" className={`${tab} flex w-[171px] items-center gap-[13px] border-transparent pl-5`}>
              <GaugeIcon />控制面板窗口
            </button>
            <button role="tab" aria-selected="false" className={`${tab} flex w-[171px] items-center gap-3 border-transparent pl-5`}>
              <WaveIcon />录波面板窗口
            </button>
          </div>
          <div role="tablist" className="flex h-10 shrink-0 bg-[#efefef]">
            {["提示信息", "1个错误", "6个警告"].map((t, i) => (
              <button
                key={t}
                role="tab"
                aria-selected={pane === i}
                onClick={() => setPane(i)}
                className={`${tab} ${["w-[100px]", "w-[94px]", "w-[94px]"][i]} pb-[1px] ${pane === i ? "border-[#0f7a74] bg-white font-bold text-black" : "border-transparent text-[#555]"}`}
              >
                {t}
              </button>
            ))}
          </div>
          <p className="pt-[5px] pl-[5px] text-[16px] leading-6 text-[#f00]">09:32:30: 计算启动失败,连接超时</p>
        </div>
      </main>
      <footer className="flex h-[34px] shrink-0 items-center border-t border-[#ececec] text-[15px] text-[#333]">
        <span className="flex h-[30px] w-[155px] items-center border-r border-[#d8d8d8] pl-[2px]">843,299</span>
        <span className="flex h-[30px] w-[57px] items-center border-r border-[#d8d8d8] pl-[5px]">100%</span>
        <span className="flex h-[30px] w-[156px] items-center border-r border-[#d8d8d8] pl-[5px]">
          <span className="flex h-[28px] w-[147px] items-center justify-end border-[3px] border-[#8c8c8c] pr-[9px]">
            <svg viewBox="0 0 9 20" className="h-5 w-[9px]" fill="none" stroke="#8c8c8c" strokeWidth="2"><path d="M1 9V1h7v8M1 11v8h7v-8" /></svg>
          </span>
        </span>
      </footer>
      <div className="flex h-[10px] shrink-0 overflow-hidden bg-gradient-to-r from-[#20373f] to-[#1a2742]">
        <div className="ml-[60px] h-full w-[360px] border-t border-[#aaa] bg-[#f0f0f0]" />
        <span className="mt-[6px] ml-auto text-[13px] leading-3 text-white">9:34</span>
        <span className="mr-[5px] ml-[92px] w-px bg-[#7b8494]" />
      </div>
      <SogouBar />
      <div aria-hidden="true" className="pointer-events-none absolute inset-0 overflow-hidden">
        {marks.map((m) => (
          <span key={m} className={`absolute ${m} -translate-x-1/2 -translate-y-1/2 -rotate-[31deg] text-[26px] font-extrabold whitespace-pre text-black/6`}>
            {"Kortrong  zhongyf"}
          </span>
        ))}
      </div>
    </div>
  );
}
